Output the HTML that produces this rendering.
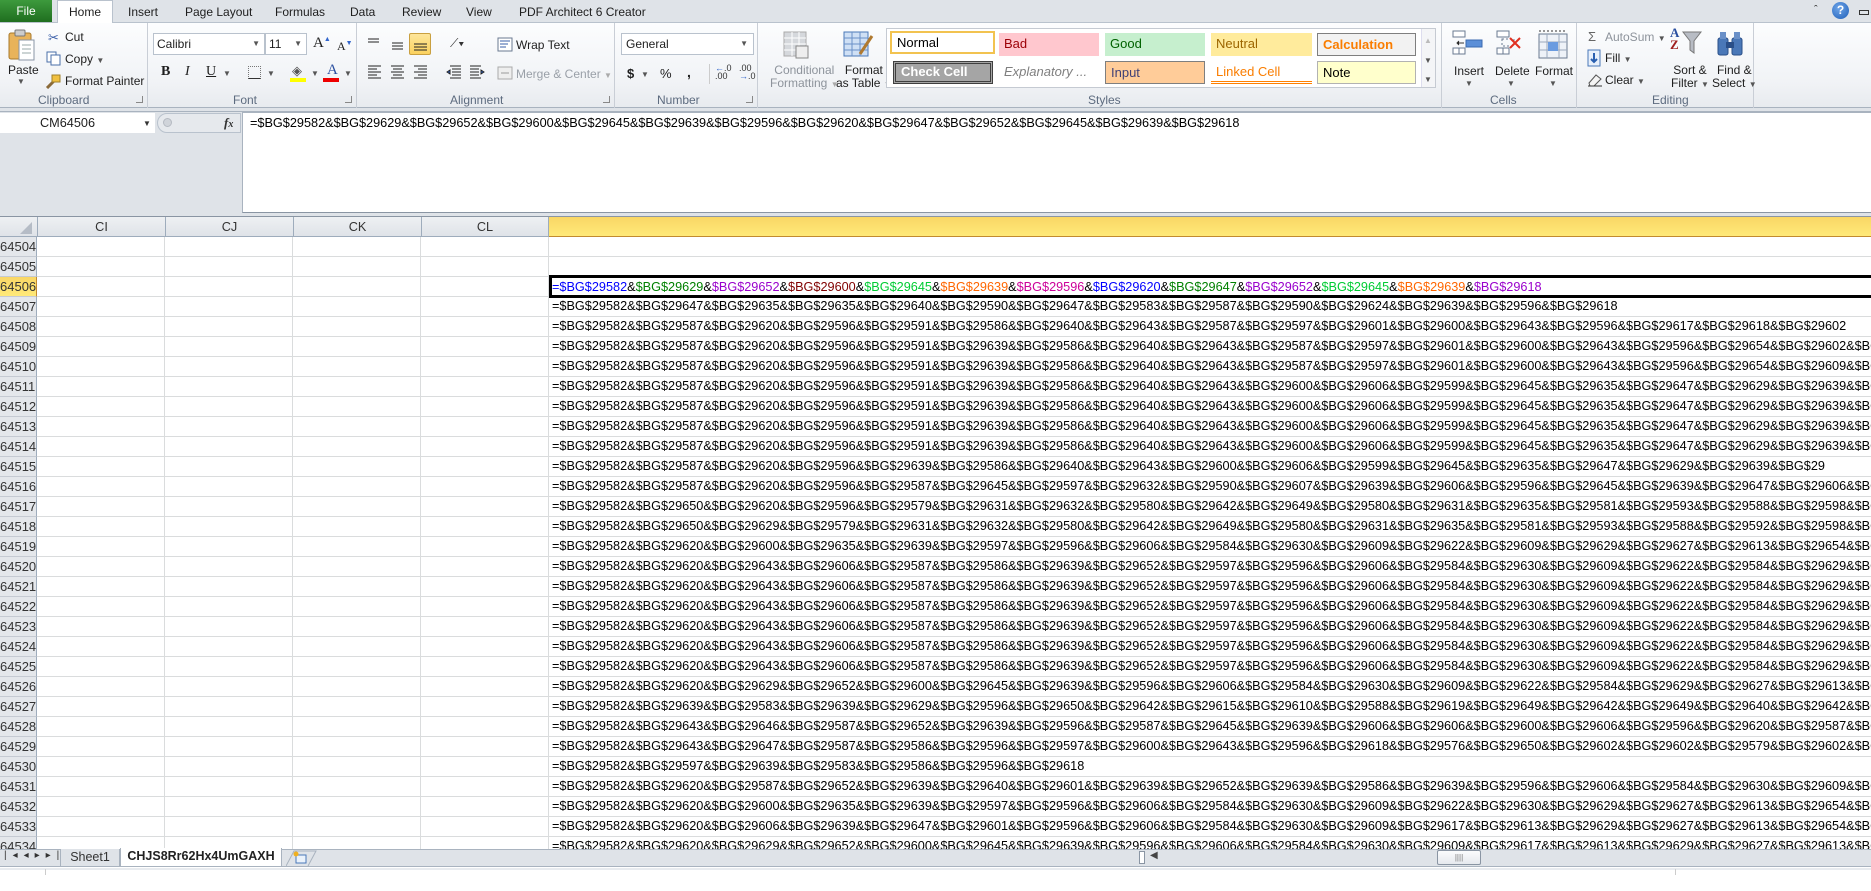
<!DOCTYPE html>
<html><head><meta charset="utf-8">
<style>
*{margin:0;padding:0;box-sizing:border-box}
body{width:1871px;height:891px;overflow:hidden;background:#fff;font-family:"Liberation Sans",sans-serif;position:relative;color:#1e1e1e}
.a{position:absolute;white-space:nowrap}
.t{font-size:12px}
.lbl{font-size:12px;color:#5d6b7f}
.grp{position:absolute;top:23px;height:85px;border-right:1px solid #c9ced6}
.ic{position:absolute}
.dd{font-size:8px;color:#555}
.row{position:absolute;left:0;width:1871px;height:20px;border-bottom:1px solid #dadcdd}
.rh{position:absolute;left:0;width:37px;height:20px;background:#e4e7eb;border-right:1px solid #9eacbc;border-bottom:1px solid #c5cad2;text-align:right;font-size:13px;line-height:19px;color:#333;overflow:hidden;padding-right:1px}
.cd{position:absolute;left:552px;font-size:12.7px;line-height:19px;color:#000;white-space:nowrap}
.vl{position:absolute;top:237px;width:1px;height:612px;background:#dadcdd}
.sty{position:absolute;height:23px;font-size:13px;line-height:21px;padding-left:5px;overflow:hidden}
</style></head><body>

<!-- tab strip -->
<div class="a" style="left:0;top:0;width:1871px;height:23px;background:#dfe3e8;border-bottom:1px solid #b9c2cd"></div>
<div class="a" style="left:0;top:0;width:52px;height:22px;background:linear-gradient(#3d9a3d,#1f6e1f);color:#fff;font-size:12px;line-height:22px;text-align:center">File</div>
<div class="a" style="left:57px;top:0;width:56px;height:24px;background:#fff;border:1px solid #b9c2cd;border-bottom:none;font-size:12px;line-height:22px;text-align:center">Home</div>
<div class="a t" style="left:128px;top:5px">Insert</div>
<div class="a t" style="left:185px;top:5px">Page Layout</div>
<div class="a t" style="left:275px;top:5px">Formulas</div>
<div class="a t" style="left:350px;top:5px">Data</div>
<div class="a t" style="left:402px;top:5px">Review</div>
<div class="a t" style="left:466px;top:5px">View</div>
<div class="a t" style="left:519px;top:5px">PDF Architect 6 Creator</div>
<div class="a" style="left:1814px;top:4px;font-size:11px;color:#333">&#710;</div>
<div class="a" style="left:1832px;top:2px;width:17px;height:17px;border-radius:50%;background:radial-gradient(circle at 40% 35%,#6fa5e8,#1f5fb8);color:#fff;font-size:12px;font-weight:bold;text-align:center;line-height:17px">?</div>
<div class="a" style="left:1859px;top:10px;width:10px;height:5px;border:1px solid #333"></div>

<!-- ribbon -->
<div class="a" style="left:0;top:23px;width:1871px;height:85px;background:linear-gradient(#fcfdfe,#f1f3f6 70%,#e8ebef);border-bottom:1px solid #a9b3bf"></div>
<div class="a" style="left:0;top:108px;width:1871px;height:4px;background:#dfe3e8;border-bottom:1px solid #a9b3bf"></div>
<div class="grp" style="left:0;width:148px"></div>
<div class="grp" style="left:148px;width:209px"></div>
<div class="grp" style="left:357px;width:258px"></div>
<div class="grp" style="left:615px;width:143px"></div>
<div class="grp" style="left:758px;width:684px"></div>
<div class="grp" style="left:1442px;width:135px"></div>
<div class="grp" style="left:1577px;width:177px"></div>
<div class="a lbl" style="left:38px;top:93px">Clipboard</div>
<div class="a lbl" style="left:233px;top:93px">Font</div>
<div class="a lbl" style="left:450px;top:93px">Alignment</div>
<div class="a lbl" style="left:657px;top:93px">Number</div>
<div class="a lbl" style="left:1088px;top:93px">Styles</div>
<div class="a lbl" style="left:1490px;top:93px">Cells</div>
<div class="a lbl" style="left:1652px;top:93px">Editing</div>
<div class="a" style="left:136px;top:96px;width:7px;height:7px;border-right:1px solid #888;border-bottom:1px solid #888"></div>
<div class="a" style="left:345px;top:96px;width:7px;height:7px;border-right:1px solid #888;border-bottom:1px solid #888"></div>
<div class="a" style="left:603px;top:96px;width:7px;height:7px;border-right:1px solid #888;border-bottom:1px solid #888"></div>
<div class="a" style="left:746px;top:96px;width:7px;height:7px;border-right:1px solid #888;border-bottom:1px solid #888"></div>

<!-- clipboard -->
<svg class="ic" style="left:8px;top:28px" width="28" height="34"><rect x="1" y="5" width="22" height="26" rx="2" fill="#e8b35a" stroke="#a87a2c"/><rect x="7" y="2" width="10" height="6" rx="1" fill="#ccc" stroke="#777"/><rect x="11" y="12" width="15" height="20" fill="#fff" stroke="#8a96a6"/><path d="M14 17h9M14 21h9M14 25h9" stroke="#9aa" /></svg>
<div class="a t" style="left:8px;top:63px">Paste</div>
<div class="a dd" style="left:17px;top:77px">▼</div>
<div class="a" style="left:48px;top:30px;font-size:13px;color:#3a5fa8">✂</div>
<div class="a t" style="left:65px;top:37px;top:30px">Cut</div>
<svg class="ic" style="left:46px;top:51px" width="15" height="15"><rect x="1" y="1" width="9" height="10" fill="#fff" stroke="#4a6fa8"/><rect x="5" y="4" width="9" height="10" fill="#fff" stroke="#4a6fa8"/></svg>
<div class="a t" style="left:65px;top:52px">Copy <span class="dd">▼</span></div>
<svg class="ic" style="left:45px;top:74px" width="16" height="15"><path d="M2 14l7-7" stroke="#8a6a3a" stroke-width="3"/><rect x="7" y="1" width="8" height="7" fill="#f0c040" stroke="#a0802a"/></svg>
<div class="a t" style="left:65px;top:74px">Format Painter</div>

<!-- font -->
<div class="a" style="left:153px;top:33px;width:112px;height:22px;background:#fff;border:1px solid #b9c2cd;font-size:12px;line-height:20px;padding-left:3px">Calibri<span class="dd" style="position:absolute;right:4px">▼</span></div>
<div class="a" style="left:265px;top:33px;width:42px;height:22px;background:#fff;border:1px solid #b9c2cd;font-size:12px;line-height:20px;padding-left:3px">11<span class="dd" style="position:absolute;right:4px">▼</span></div>
<div class="a" style="left:313px;top:35px;font-size:15px;font-family:'Liberation Serif',serif">A<sup style="font-size:7px;color:#36c">▲</sup></div>
<div class="a" style="left:337px;top:39px;font-size:12px;font-family:'Liberation Serif',serif">A<sup style="font-size:7px;color:#36c">▼</sup></div>
<div class="a" style="left:161px;top:64px;font-size:14px;font-weight:bold;font-family:'Liberation Serif',serif">B</div>
<div class="a" style="left:185px;top:64px;font-size:14px;font-style:italic;font-family:'Liberation Serif',serif">I</div>
<div class="a" style="left:206px;top:64px;font-size:14px;text-decoration:underline;font-family:'Liberation Serif',serif">U</div>
<div class="a dd" style="left:223px;top:69px">▼</div>
<div class="a" style="left:248px;top:66px;width:13px;height:13px;border:1px dotted #777;border-bottom:1px solid #333"></div>
<div class="a dd" style="left:267px;top:69px">▼</div>
<div class="a" style="left:292px;top:63px;font-size:13px;color:#555">◈</div>
<div class="a" style="left:290px;top:78px;width:16px;height:4px;background:#ff0"></div>
<div class="a dd" style="left:311px;top:69px">▼</div>
<div class="a" style="left:327px;top:62px;font-size:15px;color:#2a4fa0;font-family:'Liberation Serif',serif">A</div>
<div class="a" style="left:323px;top:78px;width:16px;height:4px;background:#e00"></div>
<div class="a dd" style="left:344px;top:69px">▼</div>

<!-- alignment -->
<svg class="ic" style="left:366px;top:36px" width="80" height="16"><path d="M2 3h11M2 6h11M26 7h11M26 10h11M26 13h11" stroke="#222"/></svg>
<div class="a" style="left:409px;top:33px;width:22px;height:22px;background:linear-gradient(#fde59a,#fbd25e);border:1px solid #c9a040;border-radius:2px"></div>
<svg class="ic" style="left:413px;top:36px" width="16" height="16"><path d="M1 8h13M1 11h13M1 14h13" stroke="#222"/></svg>
<div class="a" style="left:450px;top:36px;font-size:12px;color:#333">⟋▾</div>
<svg class="ic" style="left:366px;top:65px" width="90" height="14"><path d="M2 1h13M2 4h9M2 7h13M2 10h9M2 13h13 M25 1h13M27 4h9M25 7h13M27 10h9M25 13h13 M48 1h13M52 4h9M48 7h13M52 10h9M48 13h13" stroke="#222"/></svg>
<svg class="ic" style="left:446px;top:65px" width="40" height="14"><path d="M4 1h11M6 4h9M6 7h9M6 10h9M4 13h11M1 7l3-2v4z M24 1h11M24 4h9M24 7h9M24 10h9M24 13h11M38 7l-3-2v4z" stroke="#222" fill="#36c"/></svg>
<svg class="ic" style="left:497px;top:36px" width="16" height="16"><rect x="1" y="2" width="14" height="13" fill="#fff" stroke="#6a7a90"/><path d="M3 5h10M3 8h8M3 11h6" stroke="#3a5fa8"/></svg>
<div class="a t" style="left:516px;top:38px">Wrap Text</div>
<svg class="ic" style="left:497px;top:66px" width="16" height="14"><rect x="1" y="1" width="14" height="12" fill="#eee" stroke="#aaa"/><path d="M4 7h8" stroke="#999"/></svg>
<div class="a t" style="left:516px;top:67px;color:#9aa0a8">Merge &amp; Center <span class="dd" style="color:#aaa">▼</span></div>

<!-- number -->
<div class="a" style="left:621px;top:33px;width:133px;height:22px;background:#fff;border:1px solid #b9c2cd;font-size:12px;line-height:20px;padding-left:4px">General<span class="dd" style="position:absolute;right:5px">▼</span></div>
<div class="a" style="left:627px;top:66px;font-size:13px;font-weight:bold">$</div>
<div class="a dd" style="left:641px;top:70px">▼</div>
<div class="a" style="left:660px;top:66px;font-size:13px">%</div>
<div class="a" style="left:687px;top:64px;font-size:14px;font-weight:bold">,</div>
<div class="a" style="left:709px;top:64px;width:1px;height:20px;background:#ccc"></div>
<div class="a" style="left:715px;top:64px;font-size:9px;line-height:8px;color:#333"><span style="color:#36c">←</span>.0<br>.00</div>
<div class="a" style="left:739px;top:64px;font-size:9px;line-height:8px;color:#333">.00<br><span style="color:#36c">→</span>.0</div>

<!-- styles -->
<svg class="ic" style="left:782px;top:30px" width="30" height="30"><rect x="2" y="2" width="22" height="24" fill="#d5d8dc" stroke="#aaa"/><path d="M2 8h22M2 14h22M2 20h22M10 2v24M17 2v24" stroke="#fff"/><rect x="14" y="16" width="12" height="12" fill="#eee" stroke="#888"/></svg>
<div class="a t" style="left:770px;top:64px;color:#8d939b;text-align:center;line-height:13px">Conditional<br>Formatting <span class="dd" style="color:#aaa">▼</span></div>
<svg class="ic" style="left:842px;top:30px" width="32" height="30"><rect x="2" y="2" width="24" height="24" fill="#cfe0f5" stroke="#4a78b8"/><path d="M2 8h24M2 14h24M2 20h24M10 2v24M18 2v24" stroke="#6a90c8"/><path d="M30 6l-12 18" stroke="#b07a30" stroke-width="3"/></svg>
<div class="a t" style="left:836px;top:64px;text-align:center;line-height:13px">Format<br>as Table <span class="dd">▼</span></div>
<div class="a" style="left:886px;top:28px;width:550px;height:60px;background:#fff;border:1px solid #c5cad2"></div>
<div class="sty" style="left:890px;top:31px;width:105px;border:2px solid #f2c350;background:#fff;line-height:19px;color:#000">Normal</div>
<div class="sty" style="left:999px;top:33px;width:100px;background:#ffc7ce;color:#9c0006">Bad</div>
<div class="sty" style="left:1105px;top:33px;width:100px;background:#c6efce;color:#006100">Good</div>
<div class="sty" style="left:1211px;top:33px;width:101px;background:#ffeb9c;color:#9c6500">Neutral</div>
<div class="sty" style="left:1317px;top:33px;width:99px;background:#f2f2f2;border:1px solid #7f7f7f;color:#fa7d00;font-weight:bold;line-height:21px">Calculation</div>
<div class="sty" style="left:893px;top:61px;width:100px;background:#a5a5a5;border:3px double #3f3f3f;color:#fff;font-weight:bold;line-height:16px">Check Cell</div>
<div class="sty" style="left:999px;top:61px;width:100px;color:#7f7f7f;font-style:italic">Explanatory ...</div>
<div class="sty" style="left:1105px;top:61px;width:100px;background:#ffcc99;border:1px solid #7f7f7f;color:#3f3f76">Input</div>
<div class="sty" style="left:1211px;top:61px;width:101px;color:#fa7d00;border-bottom:3px double #ff8001">Linked Cell</div>
<div class="sty" style="left:1317px;top:61px;width:99px;background:#ffffcc;border:1px solid #b2b2b2;color:#000">Note</div>
<div class="a" style="left:1421px;top:29px;width:14px;height:58px;background:#f4f5f7;border-left:1px solid #dde"></div>
<div class="a dd" style="left:1424px;top:36px;color:#bbb">▲</div>
<div class="a dd" style="left:1424px;top:56px">▼</div>
<div class="a dd" style="left:1424px;top:75px">▼</div>

<!-- cells -->
<svg class="ic" style="left:1452px;top:30px" width="32" height="30"><path d="M1 1h12v6H1zM1 18h12v6H1zM7 18v6M1 12h0" fill="#fff" stroke="#6a7a90"/><rect x="14" y="10" width="16" height="7" fill="#5b8fd8" stroke="#3a6ab0"/><path d="M12 13h-7m2-2l-2 2 2 2" stroke="#333"/></svg>
<svg class="ic" style="left:1496px;top:30px" width="30" height="30"><path d="M1 1h12v6H1zM1 18h12v6H1zM7 18v6" fill="#fff" stroke="#6a7a90"/><rect x="6" y="9" width="12" height="7" fill="none" stroke="#6a7a90" stroke-dasharray="2"/><path d="M14 8l10 10M24 8l-10 10" stroke="#e03020" stroke-width="2"/></svg>
<svg class="ic" style="left:1537px;top:30px" width="32" height="32"><rect x="2" y="4" width="28" height="24" fill="#eef2f8" stroke="#6a7a90"/><path d="M2 12h28M2 20h28M10 4v24M22 4v24" stroke="#9aa8bc"/><rect x="11" y="12" width="10" height="9" fill="#6a9be0"/><path d="M2 1h28" stroke="#333" stroke-dasharray="2"/></svg>
<div class="a t" style="left:1454px;top:64px">Insert</div>
<div class="a t" style="left:1495px;top:64px">Delete</div>
<div class="a t" style="left:1535px;top:64px">Format</div>
<div class="a dd" style="left:1465px;top:79px">▼</div>
<div class="a dd" style="left:1507px;top:79px">▼</div>
<div class="a dd" style="left:1549px;top:79px">▼</div>

<!-- editing -->
<div class="a" style="left:1588px;top:29px;font-size:13px;color:#666">Σ</div>
<div class="a t" style="left:1605px;top:30px;color:#8d939b">AutoSum <span class="dd">▼</span></div>
<svg class="ic" style="left:1587px;top:49px" width="14" height="18"><rect x="1" y="1" width="12" height="16" fill="#e8f0fb" stroke="#4a78b8"/><path d="M7 4v9m-3-3l3 3 3-3" stroke="#2a5fb0" stroke-width="2" fill="none"/></svg>
<div class="a t" style="left:1605px;top:51px">Fill <span class="dd">▼</span></div>
<svg class="ic" style="left:1587px;top:73px" width="16" height="14"><path d="M2 10l7-8 5 4-7 7H3z" fill="#f4f4f4" stroke="#555"/><path d="M1 13h14" stroke="#333"/></svg>
<div class="a t" style="left:1605px;top:73px">Clear <span class="dd">▼</span></div>
<div class="a" style="left:1670px;top:27px;font-size:13px;font-weight:bold;color:#2a4fa0;font-family:'Liberation Serif',serif;line-height:12px">A<br><span style="color:#a02020">Z</span></div>
<svg class="ic" style="left:1682px;top:30px" width="20" height="26"><path d="M1 2h18l-7 9v12l-4-3v-9z" fill="#b8bcc4" stroke="#777"/></svg>
<div class="a t" style="left:1671px;top:64px;text-align:center;line-height:13px">Sort &amp;<br>Filter <span class="dd">▼</span></div>
<svg class="ic" style="left:1716px;top:30px" width="28" height="28"><rect x="2" y="8" width="10" height="17" rx="2" fill="#4a78b8" stroke="#2a4f88"/><rect x="16" y="8" width="10" height="17" rx="2" fill="#4a78b8" stroke="#2a4f88"/><rect x="10" y="12" width="8" height="6" fill="#2a4f88"/><rect x="4" y="2" width="6" height="7" fill="#6a90c8"/><rect x="18" y="2" width="6" height="7" fill="#6a90c8"/></svg>
<div class="a t" style="left:1712px;top:64px;text-align:center;line-height:13px">Find &amp;<br>Select <span class="dd">▼</span></div>

<!-- formula bar -->
<div class="a" style="left:0;top:112px;width:1871px;height:105px;background:#dfe3e8"></div>
<div class="a" style="left:0;top:113px;width:155px;height:20px;background:#fff;font-size:12.7px;line-height:20px;padding-left:40px">CM64506</div>
<div class="a dd" style="left:143px;top:119px;color:#333">▼</div>
<div class="a" style="left:157px;top:113px;width:84px;height:20px;background:#e6e9ed;border-radius:10px 0 0 10px;border:1px solid #b9c2cd"></div>
<div class="a" style="left:163px;top:118px;width:9px;height:9px;border-radius:50%;background:#d0d4da;border:1px solid #b5bac2"></div>
<div class="a" style="left:224px;top:115px;font-size:13px;font-style:italic;font-family:'Liberation Serif',serif;font-weight:bold;color:#333">f<span style="font-size:10px">x</span></div>
<div class="a" style="left:242px;top:112px;width:1629px;height:101px;background:#fff;border-left:1px solid #a9b3bf;border-top:1px solid #a9b3bf;border-bottom:1px solid #8a95a3"></div>
<div class="a" style="left:250px;top:116px;font-size:12.7px;color:#000">=$BG$29582&amp;$BG$29629&amp;$BG$29652&amp;$BG$29600&amp;$BG$29645&amp;$BG$29639&amp;$BG$29596&amp;$BG$29620&amp;$BG$29647&amp;$BG$29652&amp;$BG$29645&amp;$BG$29639&amp;$BG$29618</div>

<!-- column headers -->
<div class="a" style="left:0;top:216px;width:1871px;height:1px;background:#8a95a3"></div>
<div class="a" style="left:0;top:217px;width:549px;height:20px;background:linear-gradient(#eef0f3,#dfe3e8);border-bottom:1px solid #9eacbc"></div>
<div class="a" style="left:20px;top:222px;width:0;height:0;border-left:12px solid transparent;border-bottom:12px solid #b5bcc6"></div>
<div class="a" style="left:37px;top:217px;width:128px;height:20px;border-left:1px solid #9eacbc;font-size:12.7px;line-height:20px;text-align:center;color:#333">CI</div>
<div class="a" style="left:165px;top:217px;width:128px;height:20px;border-left:1px solid #9eacbc;font-size:12.7px;line-height:20px;text-align:center;color:#333">CJ</div>
<div class="a" style="left:293px;top:217px;width:128px;height:20px;border-left:1px solid #9eacbc;font-size:12.7px;line-height:20px;text-align:center;color:#333">CK</div>
<div class="a" style="left:421px;top:217px;width:128px;height:20px;border-left:1px solid #9eacbc;border-right:1px solid #9eacbc;font-size:12.7px;line-height:20px;text-align:center;color:#333">CL</div>
<div class="a" style="left:549px;top:217px;width:1322px;height:20px;background:linear-gradient(#f9d665,#ffe978);border-bottom:1px solid #c28a30"></div>

<!-- grid -->
<div class="a" style="left:0;top:237px;width:1871px;height:612px;overflow:hidden">
<div style="position:absolute;left:0;top:0;width:1871px;height:612px">
<div class="vl" style="left:164px;top:0"></div><div class="vl" style="left:292px;top:0"></div><div class="vl" style="left:420px;top:0"></div><div class="vl" style="left:548px;top:0"></div>
</div>
<div class="row" style="top:0"><div class="rh">64504</div></div>
<div class="row" style="top:20px"><div class="rh">64505</div></div>
<div class="row" style="top:40px"><div class="rh" style="background:linear-gradient(#f9d665,#ffe978);border-right:1px solid #c28a30">64506</div>
<div class="cd" style="top:1px;font-size:12.7px"><span style="color:#0000ff">=$BG$29582</span>&amp;<span style="color:#008000">$BG$29629</span>&amp;<span style="color:#9900cc">$BG$29652</span>&amp;<span style="color:#800000">$BG$29600</span>&amp;<span style="color:#00cc33">$BG$29645</span>&amp;<span style="color:#ff6600">$BG$29639</span>&amp;<span style="color:#cc0099">$BG$29596</span>&amp;<span style="color:#0000ff">$BG$29620</span>&amp;<span style="color:#008000">$BG$29647</span>&amp;<span style="color:#9900cc">$BG$29652</span>&amp;<span style="color:#00cc33">$BG$29645</span>&amp;<span style="color:#ff6600">$BG$29639</span>&amp;<span style="color:#9900cc">$BG$29618</span></div></div>
<div class="row" style="top:60px"><div class="rh">64507</div><div class="cd">=$BG$29582&amp;$BG$29647&amp;$BG$29635&amp;$BG$29635&amp;$BG$29640&amp;$BG$29590&amp;$BG$29647&amp;$BG$29583&amp;$BG$29587&amp;$BG$29590&amp;$BG$29624&amp;$BG$29639&amp;$BG$29596&amp;$BG$29618</div></div>
<div class="row" style="top:80px"><div class="rh">64508</div><div class="cd">=$BG$29582&amp;$BG$29587&amp;$BG$29620&amp;$BG$29596&amp;$BG$29591&amp;$BG$29586&amp;$BG$29640&amp;$BG$29643&amp;$BG$29587&amp;$BG$29597&amp;$BG$29601&amp;$BG$29600&amp;$BG$29643&amp;$BG$29596&amp;$BG$29617&amp;$BG$29618&amp;$BG$29602</div></div>
<div class="row" style="top:100px"><div class="rh">64509</div><div class="cd">=$BG$29582&amp;$BG$29587&amp;$BG$29620&amp;$BG$29596&amp;$BG$29591&amp;$BG$29639&amp;$BG$29586&amp;$BG$29640&amp;$BG$29643&amp;$BG$29587&amp;$BG$29597&amp;$BG$29601&amp;$BG$29600&amp;$BG$29643&amp;$BG$29596&amp;$BG$29654&amp;$BG$29602&amp;$BG$29</div></div>
<div class="row" style="top:120px"><div class="rh">64510</div><div class="cd">=$BG$29582&amp;$BG$29587&amp;$BG$29620&amp;$BG$29596&amp;$BG$29591&amp;$BG$29639&amp;$BG$29586&amp;$BG$29640&amp;$BG$29643&amp;$BG$29587&amp;$BG$29597&amp;$BG$29601&amp;$BG$29600&amp;$BG$29643&amp;$BG$29596&amp;$BG$29654&amp;$BG$29609&amp;$BG$29</div></div>
<div class="row" style="top:140px"><div class="rh">64511</div><div class="cd">=$BG$29582&amp;$BG$29587&amp;$BG$29620&amp;$BG$29596&amp;$BG$29591&amp;$BG$29639&amp;$BG$29586&amp;$BG$29640&amp;$BG$29643&amp;$BG$29600&amp;$BG$29606&amp;$BG$29599&amp;$BG$29645&amp;$BG$29635&amp;$BG$29647&amp;$BG$29629&amp;$BG$29639&amp;$BG$29</div></div>
<div class="row" style="top:160px"><div class="rh">64512</div><div class="cd">=$BG$29582&amp;$BG$29587&amp;$BG$29620&amp;$BG$29596&amp;$BG$29591&amp;$BG$29639&amp;$BG$29586&amp;$BG$29640&amp;$BG$29643&amp;$BG$29600&amp;$BG$29606&amp;$BG$29599&amp;$BG$29645&amp;$BG$29635&amp;$BG$29647&amp;$BG$29629&amp;$BG$29639&amp;$BG$29</div></div>
<div class="row" style="top:180px"><div class="rh">64513</div><div class="cd">=$BG$29582&amp;$BG$29587&amp;$BG$29620&amp;$BG$29596&amp;$BG$29591&amp;$BG$29639&amp;$BG$29586&amp;$BG$29640&amp;$BG$29643&amp;$BG$29600&amp;$BG$29606&amp;$BG$29599&amp;$BG$29645&amp;$BG$29635&amp;$BG$29647&amp;$BG$29629&amp;$BG$29639&amp;$BG$29</div></div>
<div class="row" style="top:200px"><div class="rh">64514</div><div class="cd">=$BG$29582&amp;$BG$29587&amp;$BG$29620&amp;$BG$29596&amp;$BG$29591&amp;$BG$29639&amp;$BG$29586&amp;$BG$29640&amp;$BG$29643&amp;$BG$29600&amp;$BG$29606&amp;$BG$29599&amp;$BG$29645&amp;$BG$29635&amp;$BG$29647&amp;$BG$29629&amp;$BG$29639&amp;$BG$29</div></div>
<div class="row" style="top:220px"><div class="rh">64515</div><div class="cd">=$BG$29582&amp;$BG$29587&amp;$BG$29620&amp;$BG$29596&amp;$BG$29639&amp;$BG$29586&amp;$BG$29640&amp;$BG$29643&amp;$BG$29600&amp;$BG$29606&amp;$BG$29599&amp;$BG$29645&amp;$BG$29635&amp;$BG$29647&amp;$BG$29629&amp;$BG$29639&amp;$BG$29</div></div>
<div class="row" style="top:240px"><div class="rh">64516</div><div class="cd">=$BG$29582&amp;$BG$29587&amp;$BG$29620&amp;$BG$29596&amp;$BG$29587&amp;$BG$29645&amp;$BG$29597&amp;$BG$29632&amp;$BG$29590&amp;$BG$29607&amp;$BG$29639&amp;$BG$29606&amp;$BG$29596&amp;$BG$29645&amp;$BG$29639&amp;$BG$29647&amp;$BG$29606&amp;$BG$29</div></div>
<div class="row" style="top:260px"><div class="rh">64517</div><div class="cd">=$BG$29582&amp;$BG$29650&amp;$BG$29620&amp;$BG$29596&amp;$BG$29579&amp;$BG$29631&amp;$BG$29632&amp;$BG$29580&amp;$BG$29642&amp;$BG$29649&amp;$BG$29580&amp;$BG$29631&amp;$BG$29635&amp;$BG$29581&amp;$BG$29593&amp;$BG$29588&amp;$BG$29598&amp;$BG$29</div></div>
<div class="row" style="top:280px"><div class="rh">64518</div><div class="cd">=$BG$29582&amp;$BG$29650&amp;$BG$29629&amp;$BG$29579&amp;$BG$29631&amp;$BG$29632&amp;$BG$29580&amp;$BG$29642&amp;$BG$29649&amp;$BG$29580&amp;$BG$29631&amp;$BG$29635&amp;$BG$29581&amp;$BG$29593&amp;$BG$29588&amp;$BG$29592&amp;$BG$29598&amp;$BG$29</div></div>
<div class="row" style="top:300px"><div class="rh">64519</div><div class="cd">=$BG$29582&amp;$BG$29620&amp;$BG$29600&amp;$BG$29635&amp;$BG$29639&amp;$BG$29597&amp;$BG$29596&amp;$BG$29606&amp;$BG$29584&amp;$BG$29630&amp;$BG$29609&amp;$BG$29622&amp;$BG$29609&amp;$BG$29629&amp;$BG$29627&amp;$BG$29613&amp;$BG$29654&amp;$BG$29</div></div>
<div class="row" style="top:320px"><div class="rh">64520</div><div class="cd">=$BG$29582&amp;$BG$29620&amp;$BG$29643&amp;$BG$29606&amp;$BG$29587&amp;$BG$29586&amp;$BG$29639&amp;$BG$29652&amp;$BG$29597&amp;$BG$29596&amp;$BG$29606&amp;$BG$29584&amp;$BG$29630&amp;$BG$29609&amp;$BG$29622&amp;$BG$29584&amp;$BG$29629&amp;$BG$29</div></div>
<div class="row" style="top:340px"><div class="rh">64521</div><div class="cd">=$BG$29582&amp;$BG$29620&amp;$BG$29643&amp;$BG$29606&amp;$BG$29587&amp;$BG$29586&amp;$BG$29639&amp;$BG$29652&amp;$BG$29597&amp;$BG$29596&amp;$BG$29606&amp;$BG$29584&amp;$BG$29630&amp;$BG$29609&amp;$BG$29622&amp;$BG$29584&amp;$BG$29629&amp;$BG$29</div></div>
<div class="row" style="top:360px"><div class="rh">64522</div><div class="cd">=$BG$29582&amp;$BG$29620&amp;$BG$29643&amp;$BG$29606&amp;$BG$29587&amp;$BG$29586&amp;$BG$29639&amp;$BG$29652&amp;$BG$29597&amp;$BG$29596&amp;$BG$29606&amp;$BG$29584&amp;$BG$29630&amp;$BG$29609&amp;$BG$29622&amp;$BG$29584&amp;$BG$29629&amp;$BG$29</div></div>
<div class="row" style="top:380px"><div class="rh">64523</div><div class="cd">=$BG$29582&amp;$BG$29620&amp;$BG$29643&amp;$BG$29606&amp;$BG$29587&amp;$BG$29586&amp;$BG$29639&amp;$BG$29652&amp;$BG$29597&amp;$BG$29596&amp;$BG$29606&amp;$BG$29584&amp;$BG$29630&amp;$BG$29609&amp;$BG$29622&amp;$BG$29584&amp;$BG$29629&amp;$BG$29</div></div>
<div class="row" style="top:400px"><div class="rh">64524</div><div class="cd">=$BG$29582&amp;$BG$29620&amp;$BG$29643&amp;$BG$29606&amp;$BG$29587&amp;$BG$29586&amp;$BG$29639&amp;$BG$29652&amp;$BG$29597&amp;$BG$29596&amp;$BG$29606&amp;$BG$29584&amp;$BG$29630&amp;$BG$29609&amp;$BG$29622&amp;$BG$29584&amp;$BG$29629&amp;$BG$29</div></div>
<div class="row" style="top:420px"><div class="rh">64525</div><div class="cd">=$BG$29582&amp;$BG$29620&amp;$BG$29643&amp;$BG$29606&amp;$BG$29587&amp;$BG$29586&amp;$BG$29639&amp;$BG$29652&amp;$BG$29597&amp;$BG$29596&amp;$BG$29606&amp;$BG$29584&amp;$BG$29630&amp;$BG$29609&amp;$BG$29622&amp;$BG$29584&amp;$BG$29629&amp;$BG$29</div></div>
<div class="row" style="top:440px"><div class="rh">64526</div><div class="cd">=$BG$29582&amp;$BG$29620&amp;$BG$29629&amp;$BG$29652&amp;$BG$29600&amp;$BG$29645&amp;$BG$29639&amp;$BG$29596&amp;$BG$29606&amp;$BG$29584&amp;$BG$29630&amp;$BG$29609&amp;$BG$29622&amp;$BG$29584&amp;$BG$29629&amp;$BG$29627&amp;$BG$29613&amp;$BG$29</div></div>
<div class="row" style="top:460px"><div class="rh">64527</div><div class="cd">=$BG$29582&amp;$BG$29639&amp;$BG$29583&amp;$BG$29639&amp;$BG$29629&amp;$BG$29596&amp;$BG$29650&amp;$BG$29642&amp;$BG$29615&amp;$BG$29610&amp;$BG$29588&amp;$BG$29619&amp;$BG$29649&amp;$BG$29642&amp;$BG$29649&amp;$BG$29640&amp;$BG$29642&amp;$BG$29</div></div>
<div class="row" style="top:480px"><div class="rh">64528</div><div class="cd">=$BG$29582&amp;$BG$29643&amp;$BG$29646&amp;$BG$29587&amp;$BG$29652&amp;$BG$29639&amp;$BG$29596&amp;$BG$29587&amp;$BG$29645&amp;$BG$29639&amp;$BG$29606&amp;$BG$29606&amp;$BG$29600&amp;$BG$29606&amp;$BG$29596&amp;$BG$29620&amp;$BG$29587&amp;$BG$29</div></div>
<div class="row" style="top:500px"><div class="rh">64529</div><div class="cd">=$BG$29582&amp;$BG$29643&amp;$BG$29647&amp;$BG$29587&amp;$BG$29586&amp;$BG$29596&amp;$BG$29597&amp;$BG$29600&amp;$BG$29643&amp;$BG$29596&amp;$BG$29618&amp;$BG$29576&amp;$BG$29650&amp;$BG$29602&amp;$BG$29602&amp;$BG$29579&amp;$BG$29602&amp;$BG$29</div></div>
<div class="row" style="top:520px"><div class="rh">64530</div><div class="cd">=$BG$29582&amp;$BG$29597&amp;$BG$29639&amp;$BG$29583&amp;$BG$29586&amp;$BG$29596&amp;$BG$29618</div></div>
<div class="row" style="top:540px"><div class="rh">64531</div><div class="cd">=$BG$29582&amp;$BG$29620&amp;$BG$29587&amp;$BG$29652&amp;$BG$29639&amp;$BG$29640&amp;$BG$29601&amp;$BG$29639&amp;$BG$29652&amp;$BG$29639&amp;$BG$29586&amp;$BG$29639&amp;$BG$29596&amp;$BG$29606&amp;$BG$29584&amp;$BG$29630&amp;$BG$29609&amp;$BG$29</div></div>
<div class="row" style="top:560px"><div class="rh">64532</div><div class="cd">=$BG$29582&amp;$BG$29620&amp;$BG$29600&amp;$BG$29635&amp;$BG$29639&amp;$BG$29597&amp;$BG$29596&amp;$BG$29606&amp;$BG$29584&amp;$BG$29630&amp;$BG$29609&amp;$BG$29622&amp;$BG$29630&amp;$BG$29629&amp;$BG$29627&amp;$BG$29613&amp;$BG$29654&amp;$BG$29</div></div>
<div class="row" style="top:580px"><div class="rh">64533</div><div class="cd">=$BG$29582&amp;$BG$29620&amp;$BG$29606&amp;$BG$29639&amp;$BG$29647&amp;$BG$29601&amp;$BG$29596&amp;$BG$29606&amp;$BG$29584&amp;$BG$29630&amp;$BG$29609&amp;$BG$29617&amp;$BG$29613&amp;$BG$29629&amp;$BG$29627&amp;$BG$29613&amp;$BG$29654&amp;$BG$29</div></div>
<div class="row" style="top:600px"><div class="rh">64534</div><div class="cd">=$BG$29582&amp;$BG$29620&amp;$BG$29629&amp;$BG$29652&amp;$BG$29600&amp;$BG$29645&amp;$BG$29639&amp;$BG$29596&amp;$BG$29606&amp;$BG$29584&amp;$BG$29630&amp;$BG$29609&amp;$BG$29617&amp;$BG$29613&amp;$BG$29629&amp;$BG$29627&amp;$BG$29613&amp;$BG$29</div></div>
<div style="position:absolute;left:549px;top:38px;width:1330px;height:23px;border:3px solid #000"></div>
</div>

<!-- sheet tabs -->
<div class="a" style="left:0;top:849px;width:1871px;height:18px;background:#dfe3e8;border-top:1px solid #a9b3bf;border-bottom:1px solid #a9b3bf"></div>
<div class="a" style="left:4px;top:850px;font-size:10px;color:#333;letter-spacing:6px">|◂◂▸▸|</div>
<div class="a" style="left:60px;top:849px;width:60px;height:18px;background:#dfe3e8;border:1px solid #a9b3bf;border-top:none;font-size:12.5px;line-height:16px;text-align:center;color:#333">Sheet1</div>
<div class="a" style="left:120px;top:848px;width:162px;height:19px;background:#fff;border:1px solid #a9b3bf;border-top:none;font-size:12.5px;font-weight:bold;line-height:17px;text-align:center;color:#222">CHJS8Rr62Hx4UmGAXH</div>
<svg class="ic" style="left:286px;top:850px" width="40" height="16"><path d="M0 16L8 1h22L22 16" fill="#dfe3e8" stroke="#a9b3bf"/><rect x="10" y="5" width="10" height="8" fill="#eaf2fb" stroke="#4a78b8"/><circle cx="10" cy="4" r="2.5" fill="#f0b020"/></svg>
<div class="a" style="left:1139px;top:851px;width:6px;height:13px;background:#fff;border:1px solid #8a95a3"></div>
<div class="a" style="left:1150px;top:850px;font-size:10px;color:#444">◀</div>
<div class="a" style="left:1437px;top:850px;width:44px;height:15px;background:linear-gradient(#fbfcfd,#e6e9ee);border:1px solid #8a95a3;border-radius:2px;font-size:8px;text-align:center;line-height:13px;color:#777">||||</div>
<div class="a" style="left:0;top:868px;width:1871px;height:2px;background:#e8ebef"></div>
<div class="a" style="left:45px;top:869px;width:1px;height:6px;background:#ccc"></div>
<div class="a" style="left:1675px;top:869px;width:1px;height:6px;background:#ccc"></div>
</body></html>
